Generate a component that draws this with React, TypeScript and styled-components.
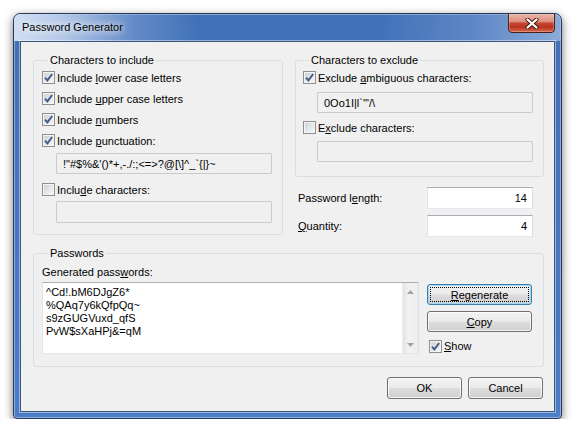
import React from "react";
import styled, { createGlobalStyle } from "styled-components";

const GlobalStyle = createGlobalStyle`
  html, body { margin: 0; padding: 0; background: #ffffff; }
  body {
    font-family: "Liberation Sans", Arial, sans-serif;
    font-size: 11px;
    color: #000;
  }
`;

const Page = styled.div`
  padding: 13px 0 0 13px;
`;

const Window = styled.div`
  width: 549px;
  height: 406px;
  box-sizing: border-box;
  border: 1px solid #27395a;
  border-radius: 7px 7px 4px 4px;
  background: linear-gradient(180deg, #4070b8 0%, #4677c0 60%, #4a7dc7 100%);
  box-shadow: 0 3px 10px rgba(0, 0, 0, 0.55), inset 0 0 0 1px rgba(255, 255, 255, 0.4);
  padding: 0 6px 6px;
  display: flex;
  flex-direction: column;
  overflow: hidden;
`;

const TitleBar = styled.div`
  height: 27px;
  display: flex;
  justify-content: space-between;
  align-items: flex-start;
  margin: 0 -6px;
  padding: 0 6px;
  background: linear-gradient(
    90deg,
    rgba(215, 228, 245, 0.95) 0%,
    rgba(200, 216, 240, 0.85) 9%,
    rgba(140, 170, 218, 0.45) 22%,
    rgba(80, 120, 190, 0) 34%,
    rgba(80, 120, 190, 0) 66%,
    rgba(130, 162, 212, 0.45) 84%,
    rgba(170, 196, 230, 0.7) 100%
  );
`;

const Title = styled.div`
  padding: 6px 0 0 2px;
  line-height: 14px;
  font-size: 11px;
  color: #000;
  text-shadow: 0 0 6px #fff, 0 0 10px rgba(255, 255, 255, 0.9);
`;

const CloseButton = styled.div`
  width: 47px;
  height: 20px;
  box-sizing: border-box;
  margin-top: -1px;
  border: 1px solid #4e1d16;
  border-radius: 0 0 4px 4px;
  background: linear-gradient(
    180deg,
    #ebb6aa 0%,
    #dc8d7d 42%,
    #c64a35 50%,
    #b8321f 72%,
    #d46a4e 100%
  );
  box-shadow: inset 0 0 0 1px rgba(255, 210, 200, 0.35);
  display: flex;
  align-items: center;
  justify-content: center;
`;

const Client = styled.div`
  flex: 1;
  background: #f0f0f0;
  border: 1px solid #3b557c;
  box-shadow: 0 0 0 1px rgba(255, 255, 255, 0.45);
  padding: 11px 10px 0 12px;
  display: flex;
  flex-direction: column;
`;

const TopRow = styled.div`
  display: grid;
  grid-template-columns: 250px 249px;
  column-gap: 12px;
  align-items: start;
`;

const Group = styled.fieldset<{ $pl: number; $pb: number }>`
  margin: 0;
  min-width: 0;
  border: 1px solid #d5dfe5;
  border-radius: 3px;
  padding: 0 10px ${(p) => p.$pb}px ${(p) => p.$pl}px;
  box-sizing: border-box;
`;

const Legend = styled.legend`
  padding: 0 2px;
  margin-left: 6px;
  line-height: 14px;
`;

const CheckRow = styled.div<{ $mt?: number }>`
  height: 21px;
  margin-top: ${(p) => p.$mt ?? 0}px;
  display: flex;
  align-items: center;
  gap: 2px;
  white-space: nowrap;
`;

const Box = styled.span`
  width: 13px;
  height: 13px;
  box-sizing: border-box;
  border: 1px solid #8e8f8f;
  background: linear-gradient(135deg, #c9cdd3 0%, #e6e7e9 55%, #f9f9f9 100%);
  box-shadow: inset 0 0 0 1px #f4f4f4;
  display: flex;
  align-items: center;
  justify-content: center;
  flex: none;
`;

const Key = styled.span`
  text-decoration: underline;
`;

const ReadField = styled.div<{ $mt: number; $h: number }>`
  margin: ${(p) => p.$mt}px 0 0 14px;
  height: ${(p) => p.$h}px;
  box-sizing: border-box;
  border: 1px solid #cacaca;
  border-radius: 1px;
  background: #f0f0f0;
  padding: 0 6px;
  display: flex;
  align-items: center;
  white-space: nowrap;
  overflow: hidden;
`;

const RightColumn = styled.div`
  display: flex;
  flex-direction: column;
`;

const ValueRow = styled.div<{ $mt: number }>`
  margin-top: ${(p) => p.$mt}px;
  padding: 0 11px 0 3px;
  display: flex;
  align-items: center;
  justify-content: space-between;
`;

const NumberInput = styled.div`
  width: 106px;
  height: 22px;
  box-sizing: border-box;
  border: 1px solid;
  border-color: #abadb3 #dbdfe6 #e3e9ef #e2e3ea;
  background: #ffffff;
  padding-right: 5px;
  display: flex;
  align-items: center;
  justify-content: flex-end;
`;

const PasswordsGroup = styled(Group)`
  margin-top: 9px;
  padding-right: 11px;
`;

const FieldLabel = styled.div`
  margin-top: 5px;
  line-height: 14px;
`;

const PasswordsBody = styled.div`
  margin-top: 3px;
  display: flex;
  align-items: flex-start;
`;

const PasswordList = styled.div`
  width: 377px;
  height: 72px;
  box-sizing: border-box;
  border: 1px solid;
  border-color: #abadb3 #dbdfe6 #e3e9ef #e2e3ea;
  background: #ffffff;
  display: flex;
`;

const PasswordLines = styled.div`
  flex: 1;
  padding: 3px 3px 0;
  line-height: 13px;
  white-space: pre;
`;

const Scrollbar = styled.div`
  width: 15px;
  background: linear-gradient(90deg, #e4e4e4 0%, #f2f2f2 40%, #eeeeee 100%);
  border-left: 1px solid #ececec;
  display: flex;
  flex-direction: column;
  justify-content: space-between;
`;

const ScrollArrow = styled.div`
  height: 17px;
  display: flex;
  align-items: center;
  justify-content: center;
`;

const SideColumn = styled.div`
  margin-left: 8px;
  padding-top: 2px;
  width: 105px;
  display: flex;
  flex-direction: column;
  gap: 6px;
`;

const Button = styled.div<{ $w?: number; $h?: number; $focused?: boolean }>`
  width: ${(p) => (p.$w ? `${p.$w}px` : "auto")};
  height: ${(p) => p.$h ?? 22}px;
  box-sizing: border-box;
  border: 1px solid ${(p) => (p.$focused ? "#3c7fb1" : "#707070")};
  border-radius: 3px;
  background: linear-gradient(180deg, #f2f2f2 0%, #ebebeb 48%, #dddddd 52%, #cfcfcf 100%);
  box-shadow: inset 0 0 0 1px ${(p) => (p.$focused ? "#9fd6f5" : "rgba(255,255,255,0.75)")};
  outline: ${(p) => (p.$focused ? "1px dotted #000" : "none")};
  outline-offset: -4px;
  display: flex;
  align-items: center;
  justify-content: center;
  font-size: 11px;
  color: #000;
`;

const ShowRow = styled.div`
  height: 14px;
  margin: 1px 0 0 2px;
  display: flex;
  align-items: center;
  gap: 2px;
`;

const DialogButtons = styled.div`
  margin-top: 10px;
  padding-right: 1px;
  display: flex;
  justify-content: flex-end;
  gap: 6px;
`;

const CheckMark = () => (
  <svg width="9" height="9" viewBox="0 0 9 9">
    <path d="M1 4.6 L3.4 7.4 L8.2 1" fill="none" stroke="#44598e" strokeWidth="1.9" />
  </svg>
);

const CheckBox: React.FC<{ checked?: boolean }> = ({ checked }) => (
  <Box>{checked && <CheckMark />}</Box>
);

const CloseGlyph = () => (
  <svg width="14" height="11" viewBox="0 0 14 11">
    <path d="M2.5 1.5 L11.5 9.5 M11.5 1.5 L2.5 9.5" stroke="#3d1a14" strokeWidth="4" strokeLinecap="round" />
    <path d="M2.5 1.5 L11.5 9.5 M11.5 1.5 L2.5 9.5" stroke="#ffffff" strokeWidth="2.2" strokeLinecap="round" />
  </svg>
);

const Arrow: React.FC<{ up?: boolean }> = ({ up }) => (
  <svg width="7" height="4" viewBox="0 0 7 4">
    <path d={up ? "M0 4 L3.5 0 L7 4 Z" : "M0 0 L3.5 4 L7 0 Z"} fill="#a3a3a3" />
  </svg>
);

const passwords = ["^Cd!.bM6DJgZ6*", "%QAq7y6kQfpQq~", "s9zGUGVuxd_qfS", "PvW$sXaHPj&=qM"];

export default function App() {
  return (
    <Page>
      <GlobalStyle />
      <Window>
        <TitleBar>
          <Title>Password Generator</Title>
          <CloseButton>
            <CloseGlyph />
          </CloseButton>
        </TitleBar>
        <Client>
          <TopRow>
            <Group $pl={8} $pb={11}>
              <Legend>Characters to include</Legend>
              <CheckRow>
                <CheckBox checked />
                <span>Include <Key>l</Key>ower case letters</span>
              </CheckRow>
              <CheckRow>
                <CheckBox checked />
                <span>Include <Key>u</Key>pper case letters</span>
              </CheckRow>
              <CheckRow>
                <CheckBox checked />
                <span>Include <Key>n</Key>umbers</span>
              </CheckRow>
              <CheckRow>
                <CheckBox checked />
                <span>Include <Key>p</Key>unctuation:</span>
              </CheckRow>
              <ReadField $mt={2} $h={21}>{"!\"#$%&'()*+,-./:;<=>?@[\\]^_`{|}~"}</ReadField>
              <CheckRow $mt={5}>
                <CheckBox />
                <span>Inclu<Key>d</Key>e characters:</span>
              </CheckRow>
              <ReadField $mt={1} $h={22} />
            </Group>

            <RightColumn>
              <Group $pl={7} $pb={14}>
                <Legend>Characters to exclude</Legend>
                <CheckRow>
                  <CheckBox checked />
                  <span>Exclude <Key>a</Key>mbiguous characters:</span>
                </CheckRow>
                <ReadField $mt={4} $h={21}>{"0Oo1I|l`'\"/\\"}</ReadField>
                <CheckRow $mt={4}>
                  <CheckBox />
                  <span>E<Key>x</Key>clude characters:</span>
                </CheckRow>
                <ReadField $mt={3} $h={21} />
              </Group>
              <ValueRow $mt={10}>
                <span>Password l<Key>e</Key>ngth:</span>
                <NumberInput>14</NumberInput>
              </ValueRow>
              <ValueRow $mt={6}>
                <span><Key>Q</Key>uantity:</span>
                <NumberInput>4</NumberInput>
              </ValueRow>
            </RightColumn>
          </TopRow>

          <PasswordsGroup $pl={8} $pb={12}>
            <Legend>Passwords</Legend>
            <FieldLabel>Generated pass<Key>w</Key>ords:</FieldLabel>
            <PasswordsBody>
              <PasswordList>
                <PasswordLines>{passwords.join("\n")}</PasswordLines>
                <Scrollbar>
                  <ScrollArrow><Arrow up /></ScrollArrow>
                  <ScrollArrow><Arrow /></ScrollArrow>
                </Scrollbar>
              </PasswordList>
              <SideColumn>
                <Button $h={21} $focused><span><Key>R</Key>egenerate</span></Button>
                <Button $h={21}><span><Key>C</Key>opy</span></Button>
                <ShowRow>
                  <CheckBox checked />
                  <span><Key>S</Key>how</span>
                </ShowRow>
              </SideColumn>
            </PasswordsBody>
          </PasswordsGroup>

          <DialogButtons>
            <Button $w={75}>OK</Button>
            <Button $w={75}>Cancel</Button>
          </DialogButtons>
        </Client>
      </Window>
    </Page>
  );
}
